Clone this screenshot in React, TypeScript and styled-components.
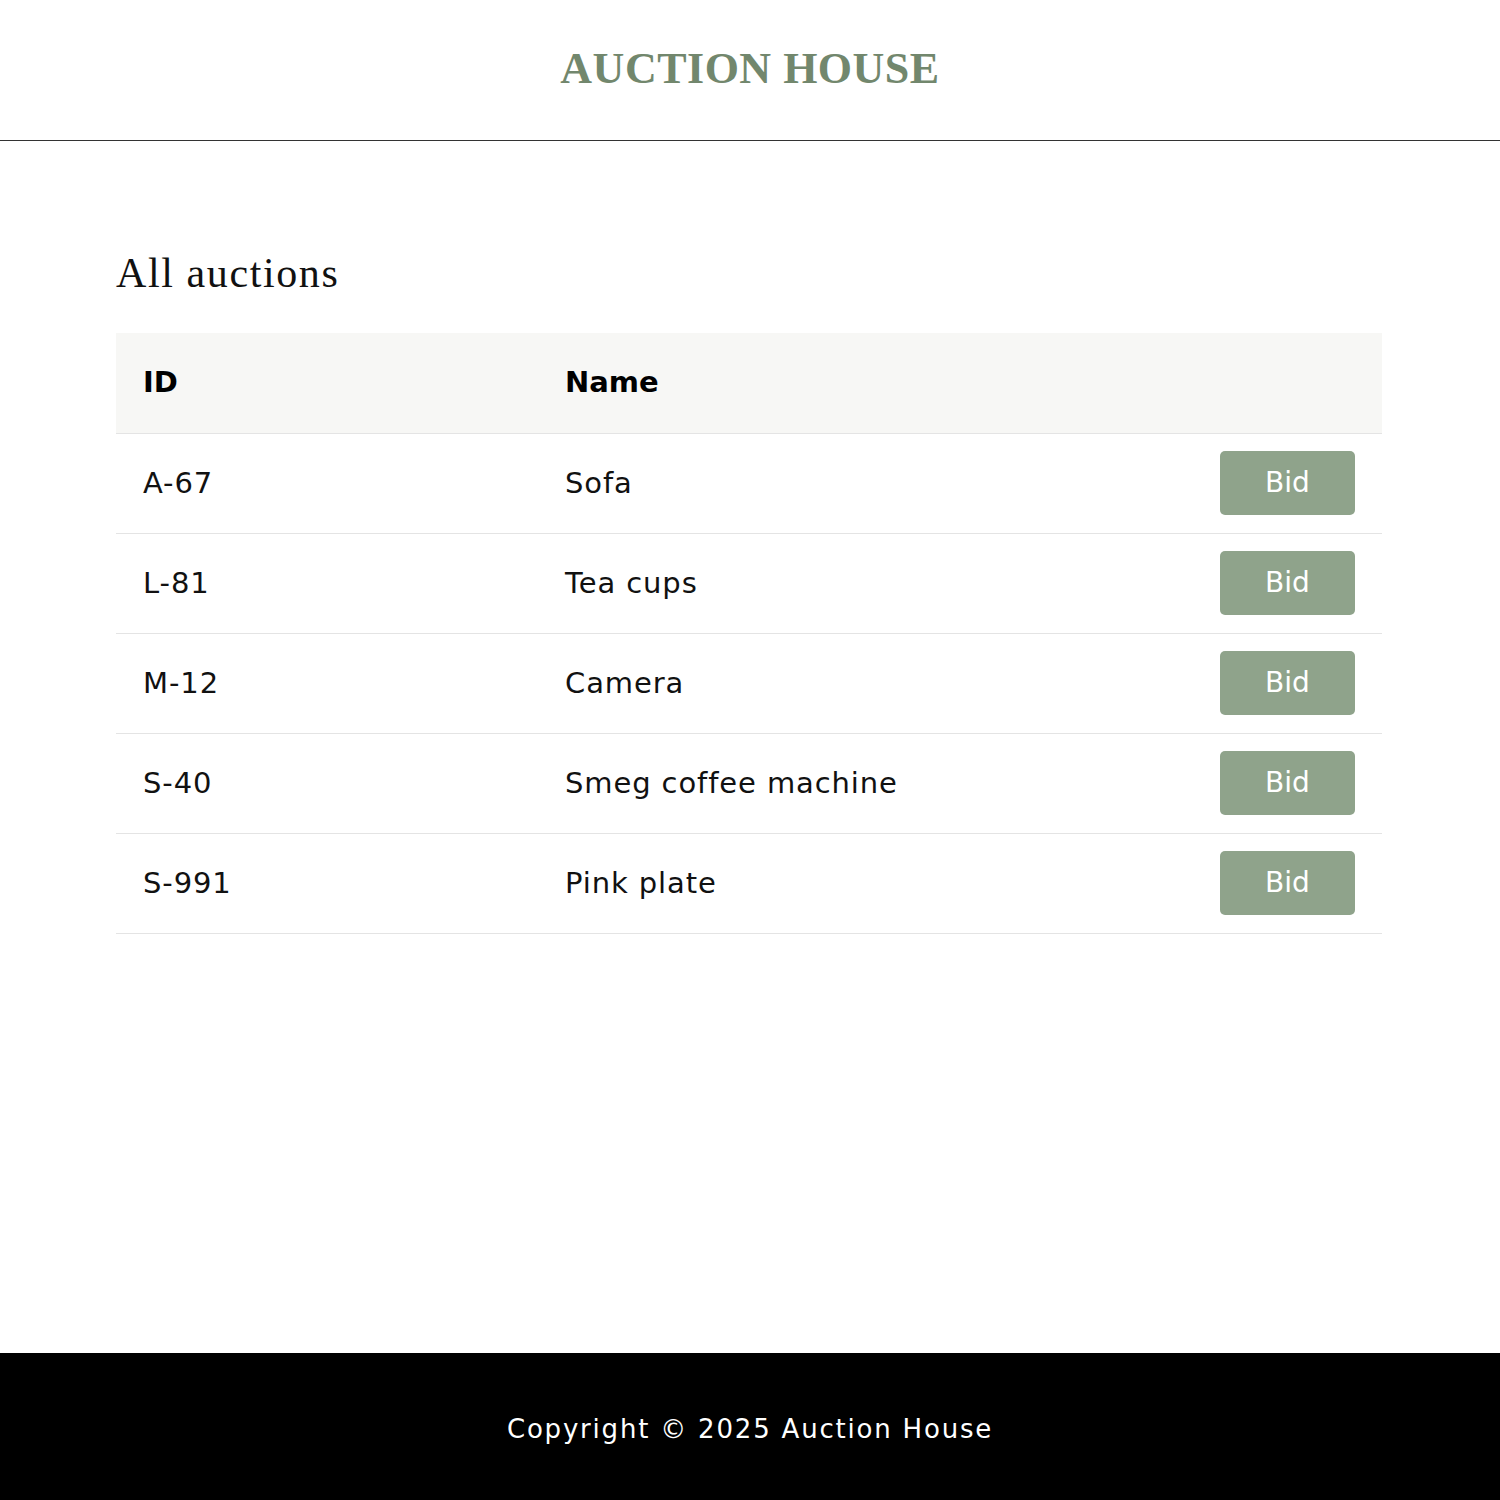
import React from "react";
import styled, { createGlobalStyle } from "styled-components";

const Global = createGlobalStyle`
  html, body { margin: 0; padding: 0; background: #fff; }
  body { font-family: "DejaVu Sans", "Open Sans", sans-serif; color: #111; }
  * { box-sizing: border-box; }
`;

const Page = styled.div`
  min-height: 100vh;
  display: flex;
  flex-direction: column;
`;

const Header = styled.header`
  height: 141px;
  border-bottom: 1px solid #333;
  display: flex;
  align-items: center;
  justify-content: center;
`;

const Brand = styled.h1`
  margin: 0;
  font-family: "Liberation Serif", "Times New Roman", serif;
  font-weight: 700;
  font-size: 44px;
  letter-spacing: 0.5px;
  color: #72876d;
  line-height: 1;
  padding-bottom: 2px;
`;

const Main = styled.main`
  flex: 1;
  padding: 106px 118px 0 116px;
`;

const Title = styled.h2`
  margin: 0 0 34px;
  font-family: "Liberation Serif", "Times New Roman", serif;
  font-weight: 400;
  font-size: 42px;
  letter-spacing: 1.6px;
  line-height: 52px;
  color: #111;
`;

const Table = styled.table`
  width: 100%;
  border-collapse: collapse;
  table-layout: fixed;
`;

const HeadRow = styled.tr`
  background: #f7f7f5;
`;

const Th = styled.th<{ $w?: string }>`
  width: ${(p) => p.$w ?? "auto"};
  height: 100px;
  padding: 0 27px 2px;
  text-align: left;
  font-weight: 700;
  font-size: 29px;
  color: #000;
  border-bottom: 1px solid #e4e4e4;
`;

const Td = styled.td<{ $right?: boolean }>`
  height: 100px;
  padding: 0 27px;
  font-size: 29px;
  letter-spacing: 0.9px;
  color: #111;
  text-align: ${(p) => (p.$right ? "right" : "left")};
  border-bottom: 1px solid #e4e4e4;
  vertical-align: middle;
`;

const BidButton = styled.button`
  width: 135px;
  height: 64px;
  border: none;
  border-radius: 5px;
  background: #8fa38b;
  color: #fff;
  font-family: "DejaVu Sans", "Open Sans", sans-serif;
  font-size: 28px;
  letter-spacing: 0;
  padding: 0 0 2px;
  cursor: pointer;
`;

const Footer = styled.footer`
  height: 147px;
  background: #000;
  color: #fff;
  display: flex;
  align-items: center;
  justify-content: center;
  font-size: 26px;
  letter-spacing: 1.8px;
  padding-top: 4px;
`;

const rows = [
  { id: "A-67", name: "Sofa" },
  { id: "L-81", name: "Tea cups" },
  { id: "M-12", name: "Camera" },
  { id: "S-40", name: "Smeg coffee machine" },
  { id: "S-991", name: "Pink plate" },
];

export default function App() {
  return (
    <Page>
      <Global />
      <Header>
        <Brand>AUCTION HOUSE</Brand>
      </Header>
      <Main>
        <Title>All auctions</Title>
        <Table>
          <thead>
            <HeadRow>
              <Th $w="33.333%">ID</Th>
              <Th>Name</Th>
              <Th $w="190px" />
            </HeadRow>
          </thead>
          <tbody>
            {rows.map((r) => (
              <tr key={r.id}>
                <Td>{r.id}</Td>
                <Td>{r.name}</Td>
                <Td $right>
                  <BidButton>Bid</BidButton>
                </Td>
              </tr>
            ))}
          </tbody>
        </Table>
      </Main>
      <Footer>Copyright © 2025 Auction House</Footer>
    </Page>
  );
}
